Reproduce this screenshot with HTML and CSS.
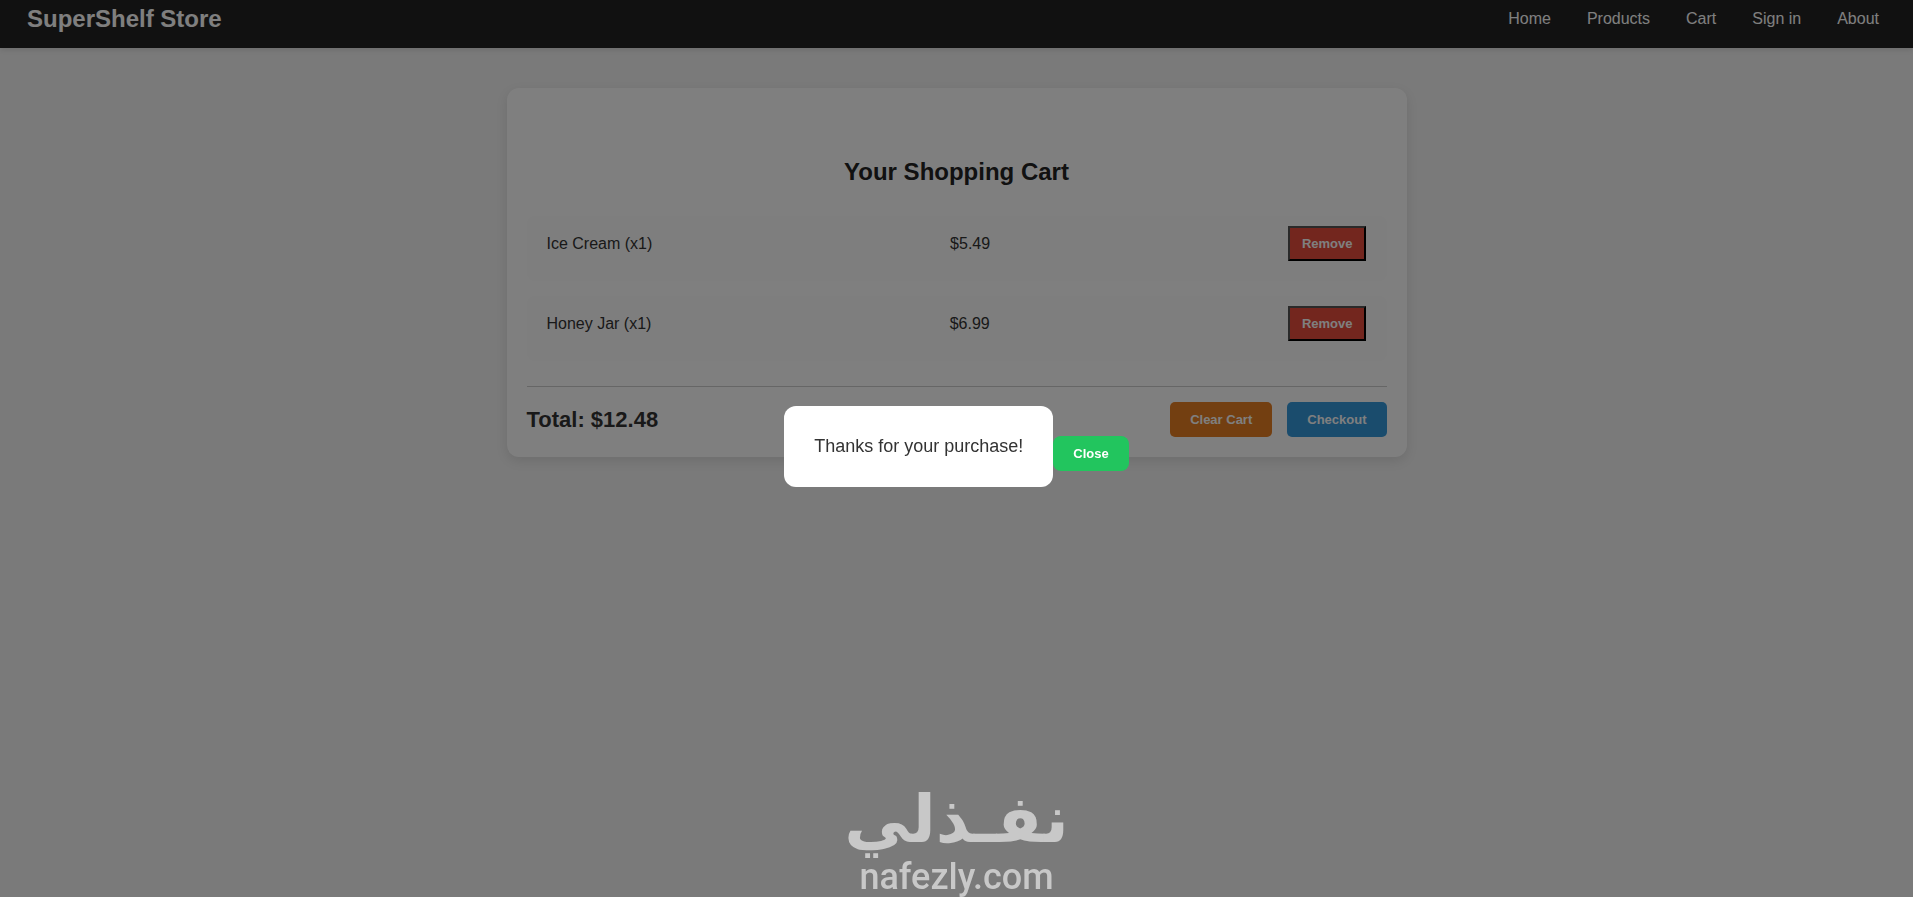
FILE: index.html
```html
<!DOCTYPE html>
<html lang="en">
<head>
    <meta charset="UTF-8">
    <meta name="viewport" content="width=device-width, initial-scale=1.0">
    <title>SuperShelf Store - Cart</title>
    <link rel="stylesheet" href="styles.css">
</head>
<body>
    <header class="header">
        <h1 class="logo">SuperShelf Store</h1>
        <nav class="nav">
            <a href="#">Home</a>
            <a href="#">Products</a>
            <a href="#">Cart</a>
            <a href="#">Sign in</a>
            <a href="#">About</a>
        </nav>
    </header>

    <main class="cart">
        <h2>Your Shopping Cart</h2>

        <div class="cart-item">
            <span>Ice Cream (x1)</span>
            <span>$5.49</span>
            <button class="remove-btn">Remove</button>
        </div>
        <div class="cart-item">
            <span>Honey Jar (x1)</span>
            <span>$6.99</span>
            <button class="remove-btn">Remove</button>
        </div>

        <div class="cart-footer">
            <h3>Total: $12.48</h3>
            <div class="cart-actions">
                <button class="btn clear-btn">Clear Cart</button>
                <button class="btn checkout-btn">Checkout</button>
            </div>
        </div>
    </main>

    <div class="modal">
        <div class="modal-content">
            <p>Thanks for your purchase!</p>
        </div>
        <button class="btn close-btn">Close</button>
    </div>

    <div class="watermark">
        <span class="watermark-ar" lang="ar" dir="rtl">نفـذلي</span>
        <span class="watermark-en">nafezly.com</span>
    </div>
</body>
</html>
```
FILE: styles.css
```css
* {
    margin: 0;
    padding: 0;
    box-sizing: border-box;
}

body {
    font-family: "Liberation Sans", Arial, sans-serif;
    background-color: #f4f4f4;
    color: #333;
}

.header {
    display: flex;
    justify-content: space-between;
    align-items: center;
    padding: 5px 34px 15px 27px;
    background-color: #222;
    color: #fff;
    box-shadow: 0 2px 5px rgba(0, 0, 0, 0.1);
}

.logo {
    font-size: 24px;
    line-height: 28px;
}

.nav {
    display: flex;
    gap: 36px;
}

.nav a {
    color: #fff;
    text-decoration: none;
}

.cart {
    max-width: 900px;
    margin: 40px auto;
    padding: 70px 20px 20px;
    background-color: #fff;
    border-radius: 12px;
    box-shadow: 0 4px 12px rgba(0, 0, 0, 0.1);
}

.cart h2 {
    margin-bottom: 30px;
    font-size: 24px;
    line-height: 28px;
    text-align: center;
    color: #222;
}

.cart-item {
    display: flex;
    justify-content: space-between;
    align-items: center;
    margin-bottom: 15px;
    padding: 10px 20px 20px;
    background-color: #fcfcfc;
    border-radius: 8px;
}

button {
    font-family: inherit;
    font-size: 13px;
    font-weight: bold;
    line-height: 15px;
    color: #fff;
    cursor: pointer;
}

.remove-btn {
    padding: 8px 12px;
    background-color: #e74c3c;
    border: 2px outset #000;
}

.cart-footer {
    display: flex;
    justify-content: space-between;
    align-items: center;
    margin-top: 25px;
    padding-top: 15px;
    border-top: 1px solid #ccc;
}

.cart-footer h3 {
    font-size: 22px;
}

.cart-actions {
    display: flex;
    gap: 15px;
}

.btn {
    padding: 10px 20px;
    border: none;
    border-radius: 5px;
}

.clear-btn {
    background-color: #e67e22;
}

.checkout-btn {
    background-color: #3498db;
}

.modal {
    position: fixed;
    inset: 0;
    display: flex;
    justify-content: center;
    align-items: center;
    padding-bottom: 4px;
    background-color: rgba(0, 0, 0, 0.5);
}

.modal-content {
    padding: 30px;
    background-color: #fff;
    border-radius: 12px;
    font-size: 18px;
    line-height: 21px;
}

.close-btn {
    margin-top: 14px;
    background-color: #22c55e;
    border-radius: 8px;
}

.watermark {
    position: fixed;
    left: 0;
    right: 0;
    bottom: 0;
    display: flex;
    flex-direction: column;
    align-items: center;
    color: #c8c8c8;
    pointer-events: none;
}

.watermark-ar {
    font-family: "DejaVu Sans", sans-serif;
    font-size: 66px;
    font-weight: bold;
    line-height: 74px;
}

.watermark-en {
    font-family: Roboto, sans-serif;
    font-size: 36px;
    font-weight: 500;
    line-height: 40px;
}
```
